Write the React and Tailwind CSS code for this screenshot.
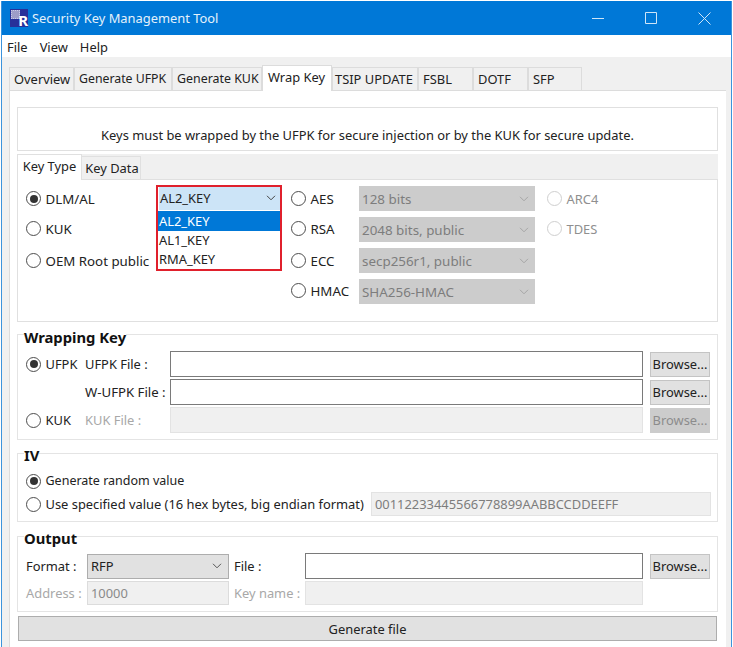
import { useState } from 'react';

function Chevron({ className }) {
  return (
    <svg width="10" height="6" viewBox="0 0 10 6" fill="none" className={className}>
      <path d="M1 .8 5 4.8 9 .8" stroke="currentColor" strokeWidth="1" />
    </svg>
  );
}

function Radio({ label, checked, disabled, className = '' }) {
  return (
    <label className={`flex items-center gap-[4.5px] whitespace-nowrap ${disabled ? 'text-[#8f8f8f]' : 'text-[#222]'} ${className}`}>
      <span className={`flex h-[15px] w-[15px] shrink-0 items-center justify-center rounded-full border bg-white ${disabled ? 'border-[#cfcfcf]' : 'border-[#4d4d4d]'}`}>
        {checked && <span className="h-[8px] w-[8px] rounded-full bg-[#333]" />}
      </span>
      {label}
    </label>
  );
}

function GraySelect({ value }) {
  return (
    <div className="flex h-[25px] w-[176px] items-center justify-between bg-[#cccccc] pl-[3px] pr-[6px] text-[13.4px] text-[#7d7d7d]">
      <span>{value}</span>
      <Chevron className="text-[#a5a5a5]" />
    </div>
  );
}

function Browse({ disabled }) {
  return (
    <button className={`ml-[7px] h-[25px] w-[60px] shrink-0 border text-center ${disabled ? 'border-[#cccccc] bg-[#cccccc] text-[#8c8c8c]' : 'border-[#c4c4c4] bg-[#e1e1e1] text-[#222]'}`}>
      Browse...
    </button>
  );
}

function FileInput({ disabled, className = 'h-[26px]' }) {
  return (
    <div className={`border ${disabled ? 'border-[#e3e3e3] bg-[#f0f0f0]' : 'border-[#7a7a7a] bg-white'} ${className}`} />
  );
}

function Group({ title, titleClass, className, children }) {
  return (
    <div className={`shrink-0 border border-[#e4e4e4] pl-[8px] ${className}`}>
      <div className={`w-fit bg-white text-[14.8px] font-bold leading-[16px] text-[#111] ml-[-2px] ${titleClass}`}>{title}</div>
      {children}
    </div>
  );
}

const mainTabs = [
  ['Overview', 'w-[65px] pl-[4px]', ''],
  ['Generate UFPK', 'w-[98px] pl-[4px]', 'text-[12.3px]'],
  ['Generate KUK', 'w-[90px] pl-[4px]', 'text-[12.4px]'],
  ['Wrap Key', 'w-[70px] pl-[5px]', ''],
  ['TSIP UPDATE', 'w-[86px] pl-[2px]', ''],
  ['FSBL', 'w-[55px] pl-[4px]', ''],
  ['DOTF', 'w-[55px] pl-[4px]', ''],
  ['SFP', 'w-[54px] pl-[4px]', ''],
];

export default function App() {
  const [tab] = useState('Wrap Key');

  return (
    <div className="h-[647px] w-[733px] overflow-hidden bg-white pl-[1px] pr-[1px] pt-[1px] font-['Noto_Sans',sans-serif] text-[12.9px] leading-[18px] text-[#222]">
      <div className="flex h-[646px] flex-col border-x border-[#3c93dc] bg-[#f0f0f0]">
        {/* title bar */}
        <div className="flex h-[34px] shrink-0 items-center bg-[#0078d7] pl-[8px] text-[12.9px] text-[#e4f1fb]">
          <div className="relative mr-[4px] h-[18px] w-[18px] bg-[#27309a]">
            <div className="absolute left-[1px] top-[1px] h-[9px] w-[9px] border border-dotted border-[#c9c9e8] bg-[#9d9dc8]" />
            <span className="absolute bottom-[-1px] right-0 text-[15px] font-bold leading-[15px] text-white">R</span>
          </div>
          <span>Security Key Management Tool</span>
          <div className="ml-auto flex items-center text-[#cfe5f7]">
            <svg width="12" height="12" viewBox="0 0 12 12" className="mr-[41px]"><path d="M0 6.500h12" stroke="currentColor" /></svg>
            <svg width="12" height="12" viewBox="0 0 12 12" className="mr-[41px]"><path d="M.5.5h11v11H.5z" fill="none" stroke="currentColor" /></svg>
            <svg width="13" height="13" viewBox="0 0 13 13" className="mr-[20px]"><path d="M.5.5l12 12M12.500.5l-12 12" stroke="currentColor" /></svg>
          </div>
        </div>

        {/* menu bar */}
        <div className="flex h-[22px] shrink-0 items-center gap-[12px] bg-white pl-[5px] pt-[1px]">
          <span>File</span>
          <span>View</span>
          <span>Help</span>
        </div>

        {/* main tabs */}
        <div className="flex h-[33px] shrink-0 items-end pl-[7px]">
          {mainTabs.map(([name, w, size]) => (
            <div
              key={name}
              className={`flex items-center border border-b-0 border-[#dcdcdc] whitespace-nowrap ${w} ${size} ${name === tab ? 'relative z-10 mb-[-1px] h-[26px] bg-white pb-[3px]' : 'h-[23px] bg-[#f0f0f0]'}`}
            >
              {name}
            </div>
          ))}
        </div>

        {/* page */}
        <div className="mr-[5px] ml-[7px] flex flex-1 flex-col border-l border-t border-[#dcdcdc] bg-white pl-[7px] pr-[8px] pt-[16px]">
          <div className="flex h-[44px] shrink-0 items-end justify-center border border-[#e0e0e0] pb-[6px]">
            Keys must be wrapped by the UFPK for secure injection or by the KUK for secure update.
          </div>

          {/* key type tabs */}
          <div className="mt-[3px] flex h-[25px] shrink-0 items-end bg-[#f0f0f0]">
            <div className="relative z-10 mb-[-1px] flex h-[26px] w-[65px] items-center justify-center border border-b-0 border-[#e0e0e0] bg-white pb-[3px]">Key Type</div>
            <div className="flex h-[23px] w-[59px] items-center justify-center border border-l-0 border-b-0 border-[#e0e0e0] pl-[2px]">Key Data</div>
          </div>

          <div className="relative grid h-[143px] shrink-0 grid-cols-[130px_135px_68px_188px_1fr] grid-rows-[25px_25px_25px_25px] content-start gap-y-[6px] border border-[#e0e0e0] pl-[8px] pt-[6px] text-[13.3px]">
            <Radio label="DLM/AL" checked />
            <div className="ml-[3px] flex h-[24px] w-[121px] items-center justify-between bg-[#cce4f7] pl-[1px] pr-[4px] text-[12.9px]">
              <span>AL2_KEY</span>
              <Chevron className="text-[#444]" />
            </div>
            <Radio label="AES" />
            <GraySelect value="128 bits" />
            <Radio label="ARC4" disabled className="text-[12.9px]" />

            <Radio label="KUK" className="mb-[2px]" />
            <div />
            <Radio label="RSA" className="mb-[2px]" />
            <GraySelect value="2048 bits, public" />
            <Radio label="TDES" disabled className="mb-[2px] text-[12.9px]" />

            <Radio label="OEM Root public" />
            <div />
            <Radio label="ECC" />
            <GraySelect value="secp256r1, public" />
            <div />

            <div />
            <div />
            <Radio label="HMAC" className="mb-[2px]" />
            <GraySelect value="SHA256-HMAC" />
            <div />

            {/* open dropdown */}
            <div className="absolute left-[138px] top-[5px] h-[86px] w-[126px] border-[2px] border-[#e0202c] text-[12.9px]">
              <div className="absolute left-0 right-0 top-[24px] flex flex-col bg-white">
                <span className="h-[20px] bg-[#0078d7] pl-[1px] leading-[20px] text-white">AL2_KEY</span>
                <span className="h-[19px] pl-[1px] leading-[19px]">AL1_KEY</span>
                <span className="h-[19px] pl-[1px] leading-[19px]">RMA_KEY</span>
              </div>
            </div>
          </div>

          {/* wrapping key */}
          <Group title="Wrapping Key" titleClass="mt-[-6px] mb-[6px]" className="mt-[12px] h-[106px]">
            <div className="flex flex-col gap-[2px]">
              <div className="flex h-[26px] items-center">
                <Radio label="UFPK" checked className="w-[59px]" />
                <span className="w-[85px]">UFPK File :</span>
                <FileInput className="h-[26px] w-[473px]" />
                <Browse />
              </div>
              <div className="flex h-[26px] items-center">
                <span className="w-[59px]" />
                <span className="w-[85px] whitespace-nowrap text-[13.2px]">W-UFPK File :</span>
                <FileInput className="h-[26px] w-[473px]" />
                <Browse />
              </div>
              <div className="flex h-[26px] items-center">
                <Radio label="KUK" className="w-[59px]" />
                <span className="w-[85px] text-[#a8a8a8]">KUK File :</span>
                <FileInput disabled className="h-[26px] w-[473px]" />
                <Browse disabled />
              </div>
            </div>
          </Group>

          {/* iv */}
          <Group title="IV" titleClass="mt-[-7px] mb-[7px]" className="mt-[13px] h-[69px] pr-[6px]">
            <div className="flex h-[22px] items-center">
              <Radio label="Generate random value" checked className="text-[12.5px]" />
            </div>
            <div className="flex h-[24px] items-center">
              <Radio label="Use specified value (16 hex bytes, big endian format)" />
              <div className="ml-auto flex h-[24px] w-[340px] items-center border border-[#e3e3e3] bg-[#f0f0f0] pl-[3px] text-[#7d7d7d]">00112233445566778899AABBCCDDEEFF</div>
            </div>
          </Group>

          {/* output */}
          <Group title="Output" titleClass="mt-[-7px] mb-[7px]" className="mt-[14px] h-[76px]">
            <div className="flex h-[26px] items-center">
              <span className="w-[61px]">Format :</span>
              <div className="flex h-[25px] w-[142px] items-center justify-between border border-[#adadad] bg-[#e1e1e1] pl-[3px] pr-[6px]">
                <span>RFP</span>
                <Chevron className="text-[#555]" />
              </div>
              <span className="ml-[5px] w-[71px]">File :</span>
              <FileInput className="h-[26px] w-[338px]" />
              <Browse />
            </div>
            <div className="mt-[2px] flex h-[24px] items-center">
              <span className="w-[61px] text-[#a8a8a8]">Address :</span>
              <div className="flex h-[24px] w-[142px] items-center border border-[#dcdcdc] bg-[#f0f0f0] pl-[3px] text-[#8a8a8a]">10000</div>
              <span className="ml-[5px] w-[71px] whitespace-nowrap text-[#a8a8a8]">Key name :</span>
              <FileInput disabled className="h-[24px] w-[338px]" />
            </div>
          </Group>

          <button className="mx-[1px] mt-[4px] h-[25px] shrink-0 border border-[#adadad] bg-[#e1e1e1] text-center">Generate file</button>
        </div>
      </div>
    </div>
  );
}
